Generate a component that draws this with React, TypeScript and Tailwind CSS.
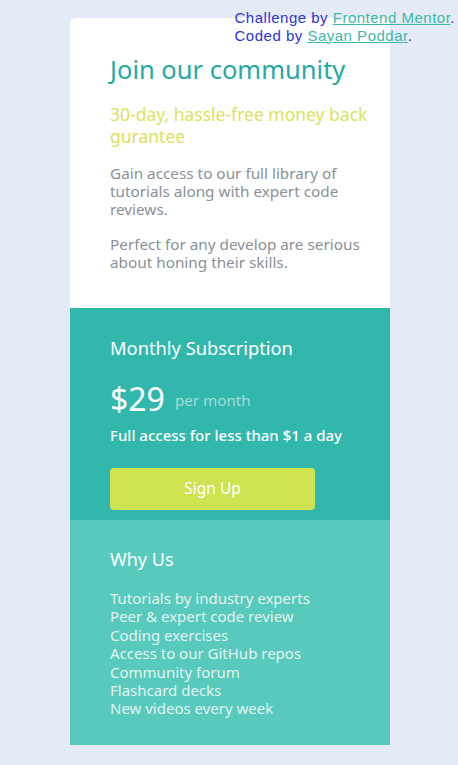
import React from "react";

const features = [
  "Tutorials by industry experts",
  "Peer & expert code review",
  "Coding exercises",
  "Access to our GitHub repos",
  "Community forum",
  "Flashcard decks",
  "New videos every week",
];

export default function App() {
  return (
    <div className="relative min-h-[765px] w-full bg-[#e4ebf6] pt-[18px] font-['Noto_Sans',sans-serif]">
      <div className="absolute right-[3px] top-[9px] font-['Liberation_Sans',sans-serif] text-[15px] leading-[17.5px] tracking-[0.5px] text-[#2a34e0]">
        <div>
          Challenge by{" "}
          <a href="#" className="text-[#3cb8a9] underline">Frontend Mentor</a>.
        </div>
        <div>
          Coded by{" "}
          <a href="#" className="text-[#3cb8a9] underline">Sayan Poddar</a>.
        </div>
      </div>
      <div className="ml-[70px] w-[320px] overflow-hidden rounded-t-[6px]">
        <section className="bg-white pb-[37px] pl-[40px] pr-[12px] pt-[35px]">
          <h1 className="text-[25.5px] leading-[32px] text-[#22aaa3]">Join our community</h1>
          <p className="mt-[18px] text-[17.5px] leading-[22px] text-[#dbe25a]">
            30-day, hassle-free money back gurantee
          </p>
          <p className="mt-[17px] text-[15.3px] leading-[18px] text-[#8a9099]">
            Gain access to our full library of tutorials along with expert code reviews.
          </p>
          <p className="mt-[17px] text-[15.3px] leading-[18px] text-[#8a9099]">
            Perfect for any develop are serious about honing their skills.
          </p>
        </section>
        <section className="bg-[#32b7ad] px-[40px] pb-[10px] pt-[28px]">
          <h2 className="text-[18.3px] leading-[24px] text-white">Monthly Subscription</h2>
          <div className="mt-[20px] flex items-center gap-[10px]">
            <span className="text-[32px] leading-[38px] text-white">$29</span>
            <span className="mt-[2px] text-[15.2px] text-[#a3ddd7]">per month</span>
          </div>
          <p className="mt-[7px] text-[15px] font-medium leading-[20px] text-white">
            Full access for less than $1 a day
          </p>
          <button className="mt-[23px] flex h-[42px] w-[205px] items-center justify-center rounded-[4px] bg-[#cfe250] text-[15.5px] text-white">
            Sign Up
          </button>
        </section>
        <section className="bg-[#58c9bd] px-[40px] pb-[27px] pt-[27px]">
          <h2 className="text-[18px] leading-[24px] text-white">Why Us</h2>
          <ul className="mt-[18px] text-[15px] leading-[18.4px] text-[#e3f4f1]">
            {features.map((f) => (
              <li key={f}>{f}</li>
            ))}
          </ul>
        </section>
      </div>
    </div>
  );
}
